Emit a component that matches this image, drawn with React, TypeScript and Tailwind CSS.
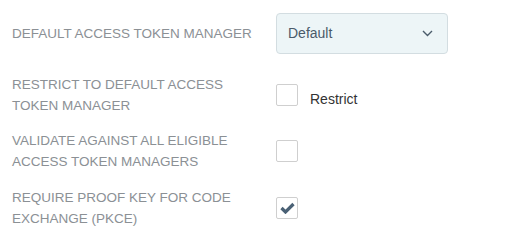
import React, { useState } from 'react';

const Checkbox: React.FC<{ checked: boolean; onChange: () => void }> = ({ checked, onChange }) => (
    <button
        type="button"
        onClick={onChange}
        className="w-[22px] h-[22px] rounded-[2px] border border-[#cfcfcf] bg-white flex items-center justify-center shrink-0"
    >
        {checked && (
            <svg width="15" height="12" viewBox="0 0 15 12">
                <path d="M1.5 6 L5.5 10 L13.5 2" fill="none" stroke="#4a6175" strokeWidth="3.2" strokeLinejoin="miter" />
            </svg>
        )}
    </button>
);

const Label: React.FC<{ children: React.ReactNode }> = ({ children }) => (
    <div className="text-[13.5px] leading-[21px] text-[#8b9095] uppercase">{children}</div>
);

export default function App() {
    const [restrict, setRestrict] = useState(false);
    const [validateAll, setValidateAll] = useState(false);
    const [pkce, setPkce] = useState(true);

    return (
        <div className="w-[511px] h-[239px] bg-white pl-3 pt-[13px]" style={{ fontFamily: '"Liberation Sans", Arial, sans-serif' }}>
            <div className="grid grid-cols-[252px_1fr] gap-x-3 items-center">
                <Label>Default Access Token Manager</Label>
                <div className="w-[172px] h-[41px] rounded-[4px] border border-[#d3dde1] bg-[#edf5f7] flex items-center justify-between pl-[11px] pr-[14px]">
                    <span className="text-[14px] text-[#4a5a6a]">Default</span>
                    <svg width="11" height="7" viewBox="0 0 11 7">
                        <path d="M1 1 L5.5 5.5 L10 1" fill="none" stroke="#4b5c6b" strokeWidth="1.4" />
                    </svg>
                </div>

                <div className="mt-[20px]">
                    <Label>Restrict to default access<br />token manager</Label>
                </div>
                <div className="mt-[20px] flex items-center gap-3">
                    <Checkbox checked={restrict} onChange={() => setRestrict(!restrict)} />
                    <span className="text-[14px] text-[#333] mt-[8px]">Restrict</span>
                </div>

                <div className="mt-[14px]">
                    <Label>Validate against all eligible<br />access token managers</Label>
                </div>
                <div className="mt-[14px]">
                    <Checkbox checked={validateAll} onChange={() => setValidateAll(!validateAll)} />
                </div>

                <div className="mt-[15px]">
                    <Label>Require proof key for code<br />exchange (PKCE)</Label>
                </div>
                <div className="mt-[15px]">
                    <Checkbox checked={pkce} onChange={() => setPkce(!pkce)} />
                </div>
            </div>
        </div>
    );
}
